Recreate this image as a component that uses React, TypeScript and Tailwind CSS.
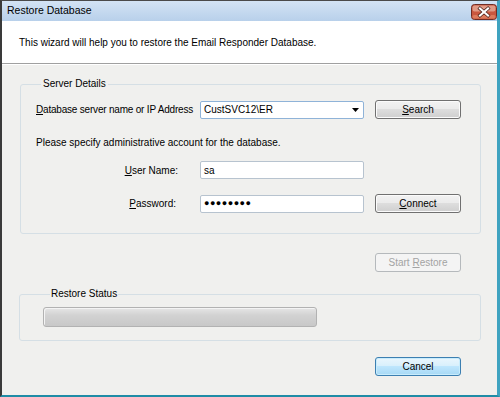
import React from 'react'

const font = { fontFamily: '"Liberation Sans", Arial, sans-serif' }

function Btn({
  children,
  variant = 'normal',
}: {
  children: React.ReactNode
  variant?: 'normal' | 'disabled' | 'default'
}) {
  const cls =
    variant === 'disabled'
      ? 'border-[#b5b9bc] bg-[#f4f4f4] text-[#a3a3a3]'
      : variant === 'default'
        ? 'border-[#3c7fb1] bg-[linear-gradient(#eaf6fd_0%,#d9f0fc_45%,#bee6fd_50%,#a7d9f5_100%)] text-black shadow-[inset_0_0_0_1px_#c8ecfc]'
        : 'border-[#707070] bg-[linear-gradient(#f2f2f2_0%,#ebebeb_45%,#dddddd_50%,#cfcfcf_100%)] text-black shadow-[inset_0_0_0_1px_#fbfbfb]'
  return (
    <button
      type="button"
      className={`flex h-[19px] w-[86px] items-center justify-center rounded-[3px] border text-[10px] leading-none ${cls}`}
    >
      <span>{children}</span>
    </button>
  )
}

function Field({ children }: { children?: React.ReactNode }) {
  return (
    <div className="flex h-[18px] w-[164px] items-center rounded-[2px] border border-[#b7c3cf] bg-white px-[3px] text-[10px] text-black">
      {children}
    </div>
  )
}

function CloseButton() {
  return (
    <svg width="26" height="16" viewBox="0 0 26 16" className="mt-[2px] block shrink-0">
      <rect x="0.5" y="0.5" width="25" height="15" rx="3" fill="#c9573f" stroke="#6f2d24" />
      <rect x="1.5" y="1.5" width="23" height="6" rx="2" fill="#e09a86" />
      <rect x="1.5" y="11" width="23" height="3.5" rx="1.5" fill="#dc7a5c" />
      <path d="M9 4.5 L17 11.5 M17 4.5 L9 11.5" stroke="#4a1f18" strokeWidth="3.6" strokeLinecap="square" />
      <path d="M9 4.5 L17 11.5 M17 4.5 L9 11.5" stroke="#ffffff" strokeWidth="2.2" strokeLinecap="square" />
    </svg>
  )
}

export default function App() {
  return (
    <div
      className="flex h-[397px] w-[500px] flex-col overflow-hidden border-t border-l-2 border-r-[3px] border-b-2 border-t-[#4a4a4a] border-l-[#3a3a3a] border-r-[#3fa3c0] border-b-[#1f8ca6] bg-[#f0f0ee] text-black"
      style={font}
    >
      {/* Title bar */}
      <div className="flex h-[20px] items-center justify-between bg-[linear-gradient(#d3e3f4,#b8d0ea)] pl-[5px]">
        <span className="text-[10.5px] text-black">Restore Database</span>
        <CloseButton />
      </div>

      {/* Header */}
      <div className="flex h-[43px] items-center border-b border-b-[#a0a0a0] bg-white pl-[17px] text-[10px] shadow-[0_1px_0_#ffffff]">
        This wizard will help you to restore the Email Responder Database.
      </div>

      {/* Body */}
      <div className="flex flex-1 flex-col pt-[13px] text-[10px]">
        <fieldset className="ml-[18px] w-[461px] rounded-[3px] border border-[#d5dfe5] pb-[20px] pl-[15px]">
          <legend className="ml-[5px] px-[2px] text-[10px] leading-[14px]">Server Details</legend>

          <div className="mt-[9px] flex items-center">
            <span className="w-[164px] whitespace-nowrap tracking-[-0.2px]">
              <span className="underline">D</span>atabase server name or IP Address
            </span>
            <div className="flex h-[18px] w-[164px] items-center justify-between rounded-[2px] border border-[#8fb3d8] bg-white pl-[3px] pr-[4px]">
              <span>CustSVC12\ER</span>
              <svg width="7" height="4" viewBox="0 0 7 4">
                <path d="M0 0 H7 L3.5 4 Z" fill="#000" />
              </svg>
            </div>
            <div className="ml-[11px]">
              <Btn>
                <span className="underline">S</span>earch
              </Btn>
            </div>
          </div>

          <div className="mt-[16px]">Please specify administrative account for the database.</div>

          <div className="mt-[11px] flex items-center">
            <span className="w-[142px] text-right">
              <span className="underline">U</span>ser Name:
            </span>
            <div className="ml-[22px]">
              <Field>sa</Field>
            </div>
          </div>

          <div className="mt-[15px] flex items-center">
            <span className="w-[140px] text-right">
              <span className="underline">P</span>assword:
            </span>
            <div className="ml-[24px]">
              <Field>
                <span className="text-[9px] tracking-[0.5px]">●●●●●●●●</span>
              </Field>
            </div>
            <div className="ml-[11px]">
              <Btn>
                <span className="underline">C</span>onnect
              </Btn>
            </div>
          </div>
        </fieldset>

        <div className="mt-[19px] ml-[373px]">
          <Btn variant="disabled">
            Start <span className="underline">R</span>estore
          </Btn>
        </div>

        <fieldset className="mt-[15px] ml-[17px] w-[462px] rounded-[3px] border border-[#d5dfe5] pb-[13px] pl-[23px]">
          <legend className="ml-[7px] px-[1px] text-[10px] leading-[14px]">Restore Status</legend>
          <div className="mt-[6px] h-[20px] w-[274px] rounded-[3px] border border-[#b2b2b2] bg-[linear-gradient(#e6e6e6_0%,#d2d2d2_40%,#c8c8c8_100%)] shadow-[inset_1px_1px_0_#f4f4f4]" />
        </fieldset>

        <div className="mt-[16px] ml-[373px]">
          <Btn variant="default">Cancel</Btn>
        </div>
      </div>
    </div>
  )
}
